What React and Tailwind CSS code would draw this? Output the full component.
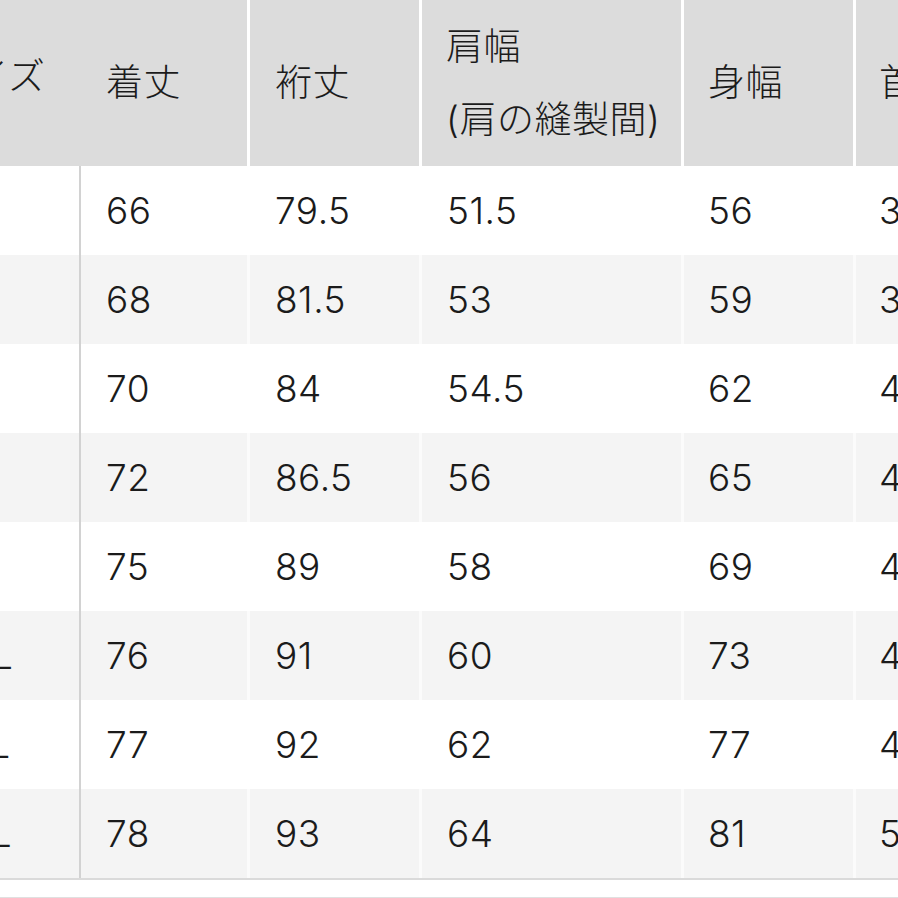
import React from "react";

const rows = [
  { size: "XS", len: "66", sleeve: "79.5", shoulder: "51.5", body: "56", neck: "37" },
  { size: "S", len: "68", sleeve: "81.5", shoulder: "53", body: "59", neck: "38" },
  { size: "M", len: "70", sleeve: "84", shoulder: "54.5", body: "62", neck: "40" },
  { size: "L", len: "72", sleeve: "86.5", shoulder: "56", body: "65", neck: "42" },
  { size: "XL", len: "75", sleeve: "89", shoulder: "58", body: "69", neck: "44" },
  { size: "XXL", len: "76", sleeve: "91", shoulder: "60", body: "73", neck: "46" },
  { size: "3XL", len: "77", sleeve: "92", shoulder: "62", body: "77", neck: "48" },
  { size: "4XL", len: "78", sleeve: "93", shoulder: "64", body: "81", neck: "50" },
];

const cell = "flex items-center shrink-0";

const App = () => {
  return (
    <div
      className="w-[898px] h-[898px] overflow-hidden bg-white text-[37px] font-light tracking-[0.5px] text-[#1b1b1b]"
      style={{ fontFamily: 'Inter, "Noto Sans CJK JP", sans-serif' }}
    >
      {/* table is scrolled sideways, size column partly out of view */}
      <div className="-ml-[80px] w-[1120px]">
        {/* header */}
        <div className="flex h-[166px] bg-white">
          <div className={`${cell} w-[161px] bg-[#dcdcdc] pl-[14px] pb-[12px]`}>サイズ</div>
          <div className="flex gap-[3px]">
            <div className={`${cell} w-[166px] bg-[#dcdcdc] pl-[25px]`}>着丈</div>
            <div className={`${cell} w-[169px] bg-[#dcdcdc] pl-[25px]`}>裄丈</div>
            <div className={`${cell} w-[259px] bg-[#dcdcdc] pl-[24px] flex-col !items-start justify-center leading-[73px]`}>
              <span>肩幅</span>
              <span>(肩の縫製間)</span>
            </div>
            <div className={`${cell} w-[169px] bg-[#dcdcdc] pl-[24px]`}>身幅</div>
            <div className={`${cell} w-[200px] bg-[#dcdcdc] pl-[23px]`}>首周り</div>
          </div>
        </div>

        {/* body */}
        {rows.map((r, i) => {
          const striped = i % 2 === 1;
          const bg = striped ? "bg-[#f4f4f4]" : "bg-white";
          return (
            <div key={r.size} className={`flex h-[89px] ${striped ? "bg-[#fbfbfb]" : "bg-white"}`}>
              <div className={`${cell} w-[161px] ${bg} border-r-2 border-[#d2d2d2] pl-[22px] whitespace-nowrap`}>
                {r.size}
              </div>
              <div className="flex gap-[3px]">
                <div className={`${cell} w-[166px] ${bg} pl-[25px]`}>{r.len}</div>
                <div className={`${cell} w-[169px] ${bg} pl-[25px]`}>{r.sleeve}</div>
                <div className={`${cell} w-[259px] ${bg} pl-[25px]`}>{r.shoulder}</div>
                <div className={`${cell} w-[169px] ${bg} pl-[24px]`}>{r.body}</div>
                <div className={`${cell} w-[200px] ${bg} pl-[23px]`}>{r.neck}</div>
              </div>
            </div>
          );
        })}

        <div className="h-[2px] bg-[#dadada]" />
        <div className="mt-[17px] h-[2px] bg-[#e0e0e0]" />
      </div>
    </div>
  );
};

export default App;
